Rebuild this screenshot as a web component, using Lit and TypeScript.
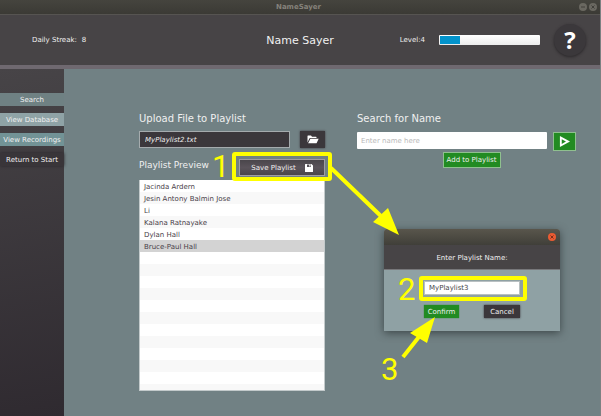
import { LitElement, html, css, svg } from "lit";
import { customElement, state } from "lit/decorators.js";

const folderIcon = svg`<svg class="folder" viewBox="0 0 24 18" aria-hidden="true">
  <path fill="#fff" d="M1 2 Q1 1 2 1 H8 L10 3.5 H18 Q19 3.5 19 4.5 V6 H6.5 Q5 6 4.4 7.3 L1 15 Z"/>
  <path fill="#fff" d="M6.8 7.5 H23.3 L19.4 15.8 Q19 16.6 18 16.6 H2.2 Z"/></svg>`;

const saveIcon = svg`<svg class="save-icon" viewBox="0 0 16 16" aria-hidden="true">
  <path fill="#fff" fill-rule="evenodd" d="M1 0 H13 L16 3 V15 Q16 16 15 16 H1 Q0 16 0 15 V1 Q0 0 1 0 Z M4 1 V6 H12 V1 Z"/>
  <path fill="#fff" d="M8.5 1 H11 V5 H8.5 Z"/></svg>`;

const playIcon = svg`<svg class="play" viewBox="0 0 12 12" aria-hidden="true">
  <path fill="#fff" fill-rule="evenodd" d="M1 0 L12 6 L1 12 Z M3 3.6 V8.6 L7.6 6 Z"/></svg>`;

@customElement("app-root")
export class AppRoot extends LitElement {
  @state() private names = [
    "Jacinda Ardern",
    "Jesin Antony Balmin Jose",
    "Li",
    "Kalana Ratnayake",
    "Dylan Hall",
    "Bruce-Paul Hall",
  ];
  @state() private selected = 5;
  @state() private progress = 20;

  static styles = css`
    :host {
      position: relative;
      display: flex;
      flex-direction: column;
      min-height: 100vh;
      box-sizing: border-box;
      overflow: hidden;
      border-right: 1px solid #7c8182;
      border-bottom: 1px solid #6c686b;
      background: #718184;
      color: #f0f0f0;
      font: 7px/12px "DejaVu Sans", sans-serif;
    }
    * { box-sizing: border-box; }
    button, input { font: inherit; color: inherit; margin: 0; padding: 0; border: 0; border-radius: 0; }
    h1, h2, ul { margin: 0; padding: 0; font-weight: normal; }
    .titlebar {
      display: grid;
      grid-template-columns: 1fr auto 1fr;
      align-items: center;
      height: 15px;
      padding-right: 3px;
      background: linear-gradient(#45443e, #3b3a35);
      border-bottom: 1px solid #565451;
      color: #85827b;
      font-weight: bold;
    }
    .window-buttons { grid-column: 3; display: flex; justify-content: flex-end; gap: 2px; }
    .window-title { grid-column: 2; }
    .round { display: block; width: 8px; height: 8px; border-radius: 50%; background: #6a6861; }
    .round svg { display: block; width: 8px; height: 8px; }
    .header {
      display: grid;
      grid-template-columns: 1fr auto 1fr;
      align-items: center;
      height: 54px;
      padding: 0 14px 0 32px;
      background: #474446;
      border-bottom: 4px solid #6f6970;
    }
    .streak { display: flex; gap: 5px; }
    .header h1 { font-size: 11px; line-height: 16px; padding: 2px 18px 0 0; }
    .level { display: flex; align-items: center; justify-content: flex-end; gap: 14px; }
    .bar { width: 101px; height: 10px; padding: 1px; border-radius: 1px; background: linear-gradient(#fff, #ececec); }
    .fill { height: 8px; background: #0393cb; }
    .help {
      width: 32px; height: 32px; border-radius: 50%;
      background: #3b383b; box-shadow: 0 1px 3px #2a272a;
      color: #fff; font: bold 24px/32px "Open Sans", sans-serif;
    }
    .body { display: flex; flex: 1; }
    .sidebar {
      display: flex; flex-direction: column; gap: 7px;
      width: 64px; padding-top: 24px;
      background: linear-gradient(170deg, #474447, #2f2a30);
    }
    .nav { width: 100%; height: 13px; line-height: 13px; padding-top: 1px; white-space: nowrap; background: #6f8183; }
    .nav.database { background: #8fa3a6; }
    .nav.recordings { background: #729396; }
    .nav.start { background: #393539; box-shadow: 0 0 3px #29262a; }
    .main {
      flex: 1;
      display: grid;
      grid-template-columns: 186fr 219fr;
      gap: 32px;
      padding: 42px 24px 25px 75px;
    }
    .column { display: flex; flex-direction: column; min-width: 0; }
    h2 { font-size: 10px; line-height: 16px; margin-bottom: 4px; white-space: nowrap; }
    .file { display: flex; gap: 10px; height: 17px; }
    .file input {
      flex: 1; min-width: 0; padding: 0 5px;
      border: 1px solid #a5abad; background: #3b373b; font-style: italic;
    }
    .browse { width: 25px; background: #3b373b; box-shadow: 0 0 2px #3b373b; }
    .folder { display: block; width: 12px; height: 9px; margin: 0 auto; }
    .preview { display: flex; align-items: center; justify-content: space-between; height: 32px; padding-top: 6px; }
    .preview h2 { font-size: 9px; line-height: 12px; margin: 0 0 4px; }
    .save {
      display: flex; align-items: center; justify-content: center; gap: 9px;
      width: 86px; height: 17px; padding-top: 1px;
      border: 1px solid #a09da1; background: linear-gradient(#4a464b, #5a535a, #4a464b);
    }
    .save-icon { width: 8px; height: 8px; }
    .list {
      flex: 1; min-height: 211px; list-style: none; color: #484048;
      border: 1px solid #c3cacb; border-top: 0;
      background: repeating-linear-gradient(#fff 0 12px, #f8f8f8 12px 24px);
    }
    .list li { height: 12px; padding: 1px 4px 0; line-height: 13px; }
    .list .selected { background: #d3d3d3; }
    .search { display: flex; align-items: flex-start; gap: 6px; padding-top: 1px; }
    .search input { flex: 1; min-width: 0; height: 17px; padding: 0 4px; background: #fff; border-radius: 1px; color: #444; }
    .search input::placeholder { color: #b9b9b9; opacity: 1; }
    .green { background: #228b22; border: 1px solid #8fc08f; }
    .go { width: 23px; height: 19px; }
    .play { display: block; width: 11px; height: 11px; margin: 0 auto; }
    .add { align-self: center; width: 58px; height: 16px; margin: 1px 0 0 10px; white-space: nowrap; }
    .dialog {
      position: absolute; left: 384px; top: 229px; width: 176px;
      border-radius: 3px 3px 0 0; box-shadow: 0 2px 8px #3c4648;
      background: #8fa1a4;
    }
    .dialog-bar {
      display: flex; align-items: center; justify-content: flex-end;
      height: 16px; padding-right: 4px; border-radius: 3px 3px 0 0;
      background: linear-gradient(#59564c, #403f39);
    }
    .close { background: #ea5b32; }
    .dialog-title { display: block; height: 25px; line-height: 26px; text-align: center; background: #474446; border-bottom: 1px solid #77777a; }
    .dialog-body { display: grid; grid-template-columns: 35px 36px; justify-content: space-between; gap: 10px 0; padding: 11px 40px 13px; }
    .dialog-body input { grid-column: 1 / 3; width: 100%; height: 14px; padding: 0 4px; background: #fff; color: #444; border: 1px solid #b9c0c2; }
    .dialog-body button { height: 13px; line-height: 13px; padding-top: 1px; }
    .confirm { background: #228b22; box-shadow: 0 0 1px #228b22; }
    .cancel { background: #3b373b; box-shadow: 0 0 2px #3b373b; }
    .notes { position: absolute; left: 0; top: 0; width: 601px; height: 416px; pointer-events: none; }
    .notes text { font: 31px Roboto, sans-serif; fill: #ff0; }
    .notes .line { fill: none; stroke: #ff0; stroke-width: 4px; }
    .notes .head { fill: #ff0; }
  `;

  private cross(color: string) {
    return svg`<svg viewBox="0 0 8 8" aria-hidden="true"><path d="M2.5 2.5 L5.5 5.5 M5.5 2.5 L2.5 5.5" stroke=${color} stroke-width="1"/></svg>`;
  }

  render() {
    return html`
      <div class="titlebar">
        <span class="window-title">NameSayer</span>
        <div class="window-buttons">
          <button class="round" aria-label="Minimise"><svg viewBox="0 0 8 8"><path d="M2 4 H6" stroke="#403f3a"/></svg></button>
          <button class="round" aria-label="Close">${this.cross("#403f3a")}</button>
        </div>
      </div>
      <header class="header">
        <div class="streak"><span>Daily Streak:</span><span>8</span></div>
        <h1>Name Sayer</h1>
        <div class="level">
          <span>Level:4</span>
          <div class="bar" role="progressbar" aria-label="Level progress" aria-valuenow=${this.progress}>
            <div class="fill" style="width:${this.progress}%"></div>
          </div>
          <button class="help">?</button>
        </div>
      </header>
      <div class="body">
        <nav class="sidebar">
          <button class="nav">Search</button>
          <button class="nav database">View Database</button>
          <button class="nav recordings">View Recordings</button>
          <button class="nav start">Return to Start</button>
        </nav>
        <main class="main">
          <section class="column">
            <h2><label for="file">Upload File to Playlist</label></h2>
            <div class="file">
              <input id="file" .value=${"MyPlaylist2.txt"} />
              <button class="browse" aria-label="Browse">${folderIcon}</button>
            </div>
            <div class="preview">
              <h2>Playlist Preview</h2>
              <button class="save">Save Playlist ${saveIcon}</button>
            </div>
            <ul class="list">
              ${this.names.map((n, i) => html`<li class=${i === this.selected ? "selected" : ""}>${n}</li>`)}
            </ul>
          </section>
          <section class="column">
            <h2><label for="name">Search for Name</label></h2>
            <div class="search">
              <input id="name" placeholder="Enter name here" />
              <button class="go green" aria-label="Search">${playIcon}</button>
            </div>
            <button class="add green">Add to Playlist</button>
          </section>
        </main>
      </div>
      <div class="dialog" role="dialog" aria-labelledby="dialog-title">
        <div class="dialog-bar"><button class="round close" aria-label="Close">${this.cross("#7b2f1b")}</button></div>
        <label class="dialog-title" id="dialog-title" for="playlist">Enter Playlist Name:</label>
        <div class="dialog-body">
          <input id="playlist" .value=${"MyPlaylist3"} />
          <button class="confirm">Confirm</button>
          <button class="cancel">Cancel</button>
        </div>
      </div>
      <svg class="notes" viewBox="0 0 601 416">
        <rect class="line" x="234" y="154" width="96" height="25" rx="1"/>
        <rect class="line" x="421" y="278" width="104" height="21" rx="1"/>
        <path class="line" d="M331 168 L384 219 M403 357 L422 333"/>
        <path class="head" d="M399 235 L373 222 L388 208 Z M435 317 L410 333 L427 343 Z"/>
        <text x="212" y="177">1</text>
        <text x="398" y="300">2</text>
        <text x="381" y="380">3</text>
      </svg>
    `;
  }
}
